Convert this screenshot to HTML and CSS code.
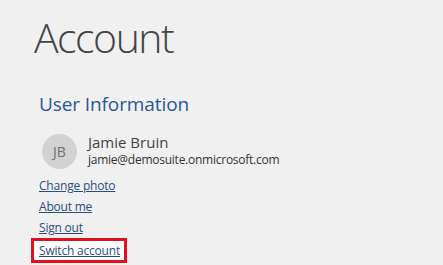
FILE: index.html
```html
<!DOCTYPE html>
<html lang="en">
<head>
  <meta charset="UTF-8" />
  <title>Account</title>
  <link rel="stylesheet" href="styles.css">
</head>
<body>
  <div class="page">
    <h1 class="page-title">Account</h1>

    <!-- User Information -->
    <section class="user-info">
      <h2 class="section-title">User Information</h2>
      <div class="profile">
        <div class="avatar">JB</div>
        <div class="who">
          <div class="name">Jamie Bruin</div>
          <div class="email">jamie@demosuite.onmicrosoft.com</div>
        </div>
      </div>
      <ul class="links">
        <li><a href="#">Change photo</a></li>
        <li><a href="#">About me</a></li>
        <li><a href="#">Sign out</a></li>
        <li class="highlight"><a href="#">Switch account</a></li>
      </ul>
    </section>
  </div>
</body>
</html>
```

FILE: styles.css
```css
body { margin: 0; background: #f0f0f0; font-family: 'Open Sans', 'Noto Sans', sans-serif; }
.page { padding: 9px 0 0 34px; }

.page-title {
  margin: 0; font-size: 41px; font-weight: 300; color: #444;
  line-height: 56px; letter-spacing: -1.5px;
}

.user-info { padding: 25px 0 0 5px; }
.section-title {
  margin: 0; font-size: 19px; font-weight: 400; color: #2b579a; line-height: 28px;
  letter-spacing: -0.1px;
}

.profile { display: flex; align-items: center; gap: 11px; margin: 16px 0 0 3px; }
.avatar {
  width: 35px; height: 35px; border-radius: 50%; background: #d2d2d2;
  color: #6e6e6e; font-size: 14px; display: flex; align-items: center; justify-content: center;
}
.who { margin-top: -3px; }
.name { font-size: 15px; color: #444; line-height: 19px; }
.email { font-size: 12px; color: #333; line-height: 16px; letter-spacing: -0.25px; }

.links { list-style: none; margin: 6px 0 0; padding: 0; }
.links li { font-size: 12px; line-height: 21px; letter-spacing: -0.2px; }
.links a { color: #2a4d80; }
.links li.highlight {
  display: inline-block; margin: -3px 0 0 -8px; padding: 0 4px 0 5px;
  border: 3px solid #e0101f; background: #fff; line-height: 19px;
}
```
